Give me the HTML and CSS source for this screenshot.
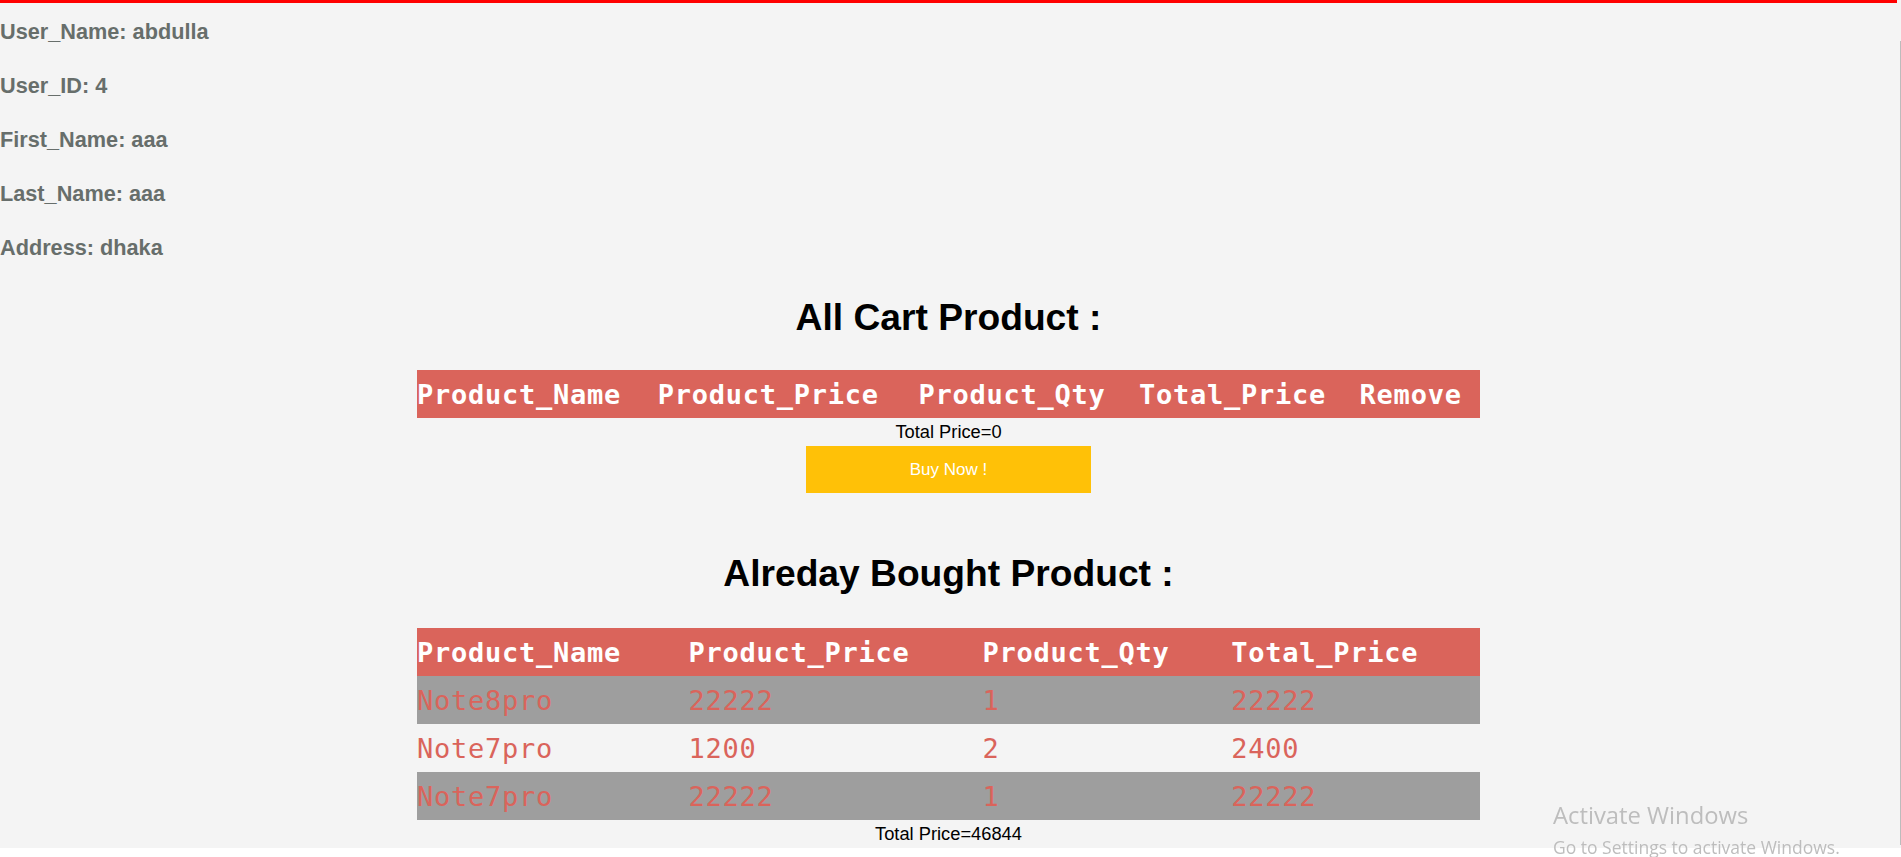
FILE: index.html
```html
<!DOCTYPE html>
<html>
<head>
<meta charset="utf-8">
<title>Profile</title>
<link rel="stylesheet" href="styles.css">
</head>
<body>
<div class="page">
  <div class="topbar"></div>
  <section class="info">
    <h4 class="info-line">User_Name: abdulla</h4>
    <h4 class="info-line">User_ID: 4</h4>
    <h4 class="info-line">First_Name: aaa</h4>
    <h4 class="info-line">Last_Name: aaa</h4>
    <h4 class="info-line">Address: dhaka</h4>
  </section>

  <section class="block cart">
    <h2 class="section-title">All Cart Product :</h2>
    <table class="products">
      <thead>
        <tr><th>Product_Name</th><th>Product_Price</th><th>Product_Qty</th><th>Total_Price</th><th>Remove</th></tr>
      </thead>
    </table>
    <p class="total">Total Price=0</p>
    <button class="buy">Buy Now !</button>
  </section>

  <section class="block bought">
    <h2 class="section-title">Alreday Bought Product :</h2>
    <table class="products">
      <thead>
        <tr><th>Product_Name</th><th>Product_Price</th><th>Product_Qty</th><th>Total_Price</th></tr>
      </thead>
      <tbody>
        <tr class="odd"><td>Note8pro</td><td>22222</td><td>1</td><td>22222</td></tr>
        <tr><td>Note7pro</td><td>1200</td><td>2</td><td>2400</td></tr>
        <tr class="odd"><td>Note7pro</td><td>22222</td><td>1</td><td>22222</td></tr>
      </tbody>
    </table>
    <p class="total last">Total Price=46844</p>
  </section>
</div>

<div class="watermark">
  <div class="wm-title">Activate Windows</div>
  <div class="wm-sub">Go to Settings to activate Windows.</div>
</div>
<div class="scrollbar"></div>
</body>
</html>
```

FILE: styles.css
```css
html, body {
  margin: 0;
  padding: 0;
  background: #ffffff;
}

body {
  font-family: "Liberation Sans", Arial, sans-serif;
  overflow: hidden;
}

.page {
  background: #f4f4f4;
  padding-right: 4px;
  padding-bottom: 4px;
}

.topbar {
  height: 3px;
  background: #ff0000;
}

.info {
  display: flex;
  flex-direction: column;
  gap: 29px;
  padding-top: 16px;
}

.info-line {
  margin: 0;
  font-size: 21.7px;
  line-height: 25px;
  font-weight: bold;
  color: #676e6b;
}

.block {
  display: flex;
  flex-direction: column;
  align-items: center;
}

.cart {
  margin-top: 36px;
}

.bought {
  margin-top: 59px;
}

.section-title {
  margin: 0 0 31px;
  font-size: 37.2px;
  line-height: 43px;
  font-weight: bold;
  color: #000000;
}

.bought .section-title {
  margin-bottom: 33px;
}

.products {
  width: 1063px;
  border-collapse: collapse;
  border-spacing: 0;
  font-family: "DejaVu Sans Mono", "Liberation Mono", monospace;
  font-size: 27px;
  letter-spacing: 0.75px;
}

.products th,
.products td {
  padding: 0;
  height: 48px;
  text-align: left;
  vertical-align: middle;
  white-space: nowrap;
}

.products th {
  background: #da645b;
  color: #ffffff;
  font-weight: bold;
}

.products td {
  color: #da645b;
  font-weight: normal;
}

.products tr.odd td {
  background: #9e9e9e;
}

.total {
  margin: 3px 0 4px;
  font-size: 18.3px;
  line-height: 21px;
  color: #000000;
}

.total.last {
  margin-bottom: 0;
}

.buy {
  width: 285px;
  height: 47px;
  border: none;
  background: #ffc107;
  color: #ffffff;
  font-family: "Liberation Sans", Arial, sans-serif;
  font-size: 17px;
  padding: 0;
}

.watermark {
  position: fixed;
  left: 1553px;
  top: 801px;
  color: #bdbdbd;
  font-family: "Open Sans", "Noto Sans", sans-serif;
  white-space: nowrap;
}

.wm-title {
  font-size: 23.8px;
  line-height: 29px;
}

.wm-sub {
  font-size: 17.5px;
  line-height: 35px;
}

.scrollbar {
  position: fixed;
  right: 0;
  top: 41px;
  width: 1px;
  height: 804px;
  background: #bcbcbc;
}
```
